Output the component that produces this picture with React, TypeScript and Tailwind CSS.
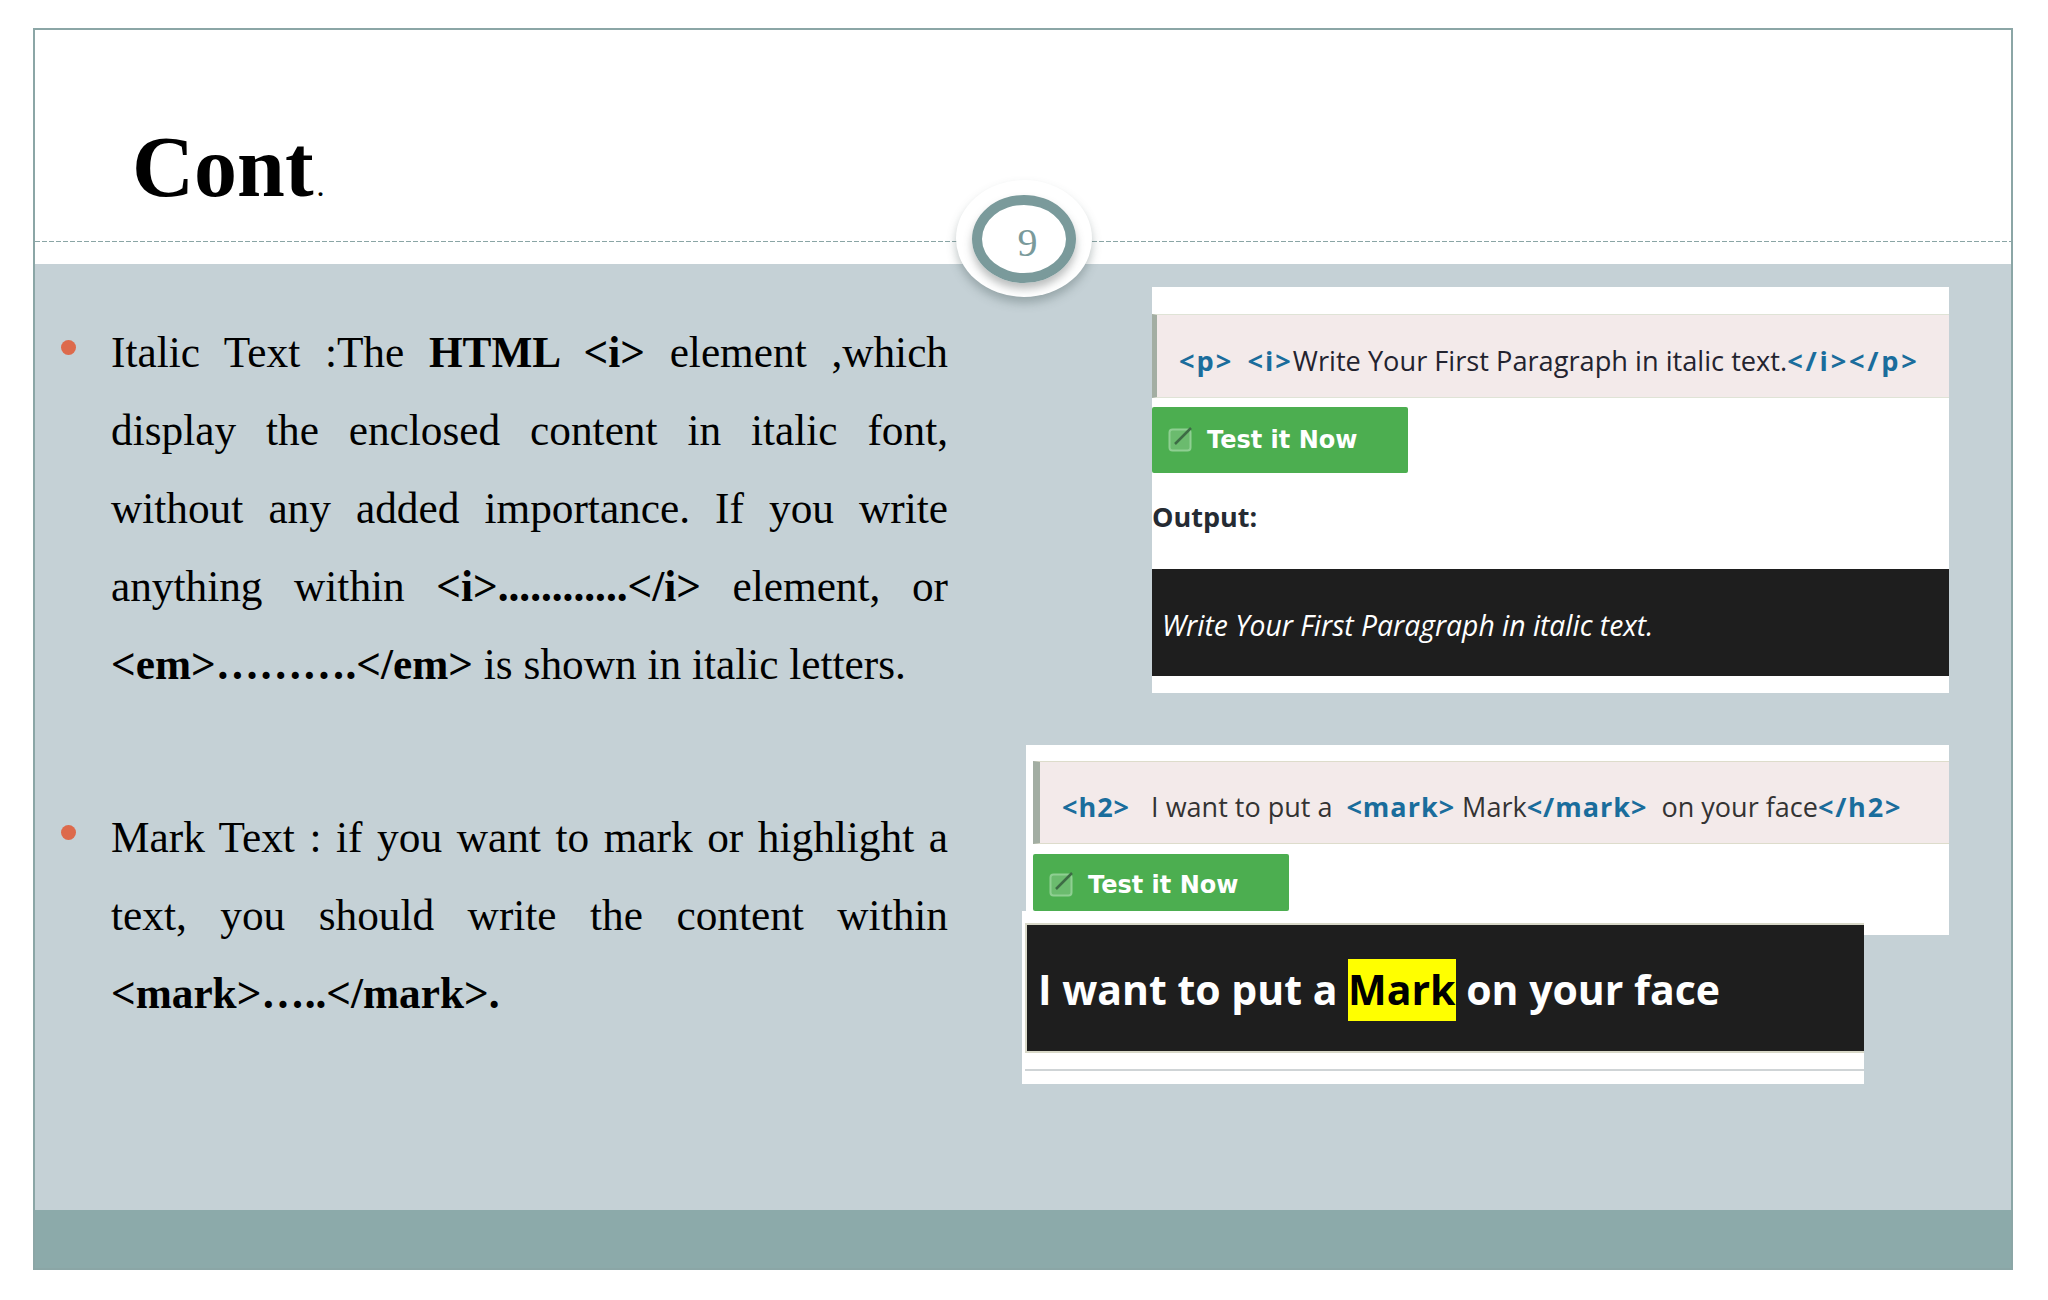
const serif = "font-['Liberation_Serif',serif]";
const ui = "font-['Open_Sans',sans-serif]";

function Tag({ children, spacing }: { children: string; spacing: string }) {
  return <span className={`font-bold text-[#1a6d9c] ${spacing}`}>{children}</span>;
}

function TestButton({ className }: { className: string }) {
  return (
    <div className={`flex w-[256px] items-center gap-[13px] rounded-[2px] bg-[#4cae50] pl-[16px] ${className}`}>
      <svg width="26" height="26" viewBox="0 0 26 26" fill="none" className="-mt-[2px]">
        <rect x="1.5" y="3.5" width="21" height="21" rx="3" fill="#6bbb6e" stroke="#8fcf92" strokeWidth="2" />
        <path d="M7 18 L23 2" stroke="#3d6b45" strokeWidth="2.5" />
      </svg>
      <span className="font-['DejaVu_Sans',sans-serif] text-[24px] font-bold leading-none text-white">Test it Now</span>
    </div>
  );
}

function Bullet({ children, className }: { children: React.ReactNode; className?: string }) {
  return (
    <li className={`flex ${className ?? ""}`}>
      <span className="mt-[27px] size-[15px] shrink-0 rounded-full bg-[#dd6a4c]" />
      <p className="ml-[35px] w-[837px] text-justify">{children}</p>
    </li>
  );
}

function PageBadge() {
  return (
    <div className="absolute left-[921px] top-[150px] flex h-[117px] w-[136px] items-center justify-center rounded-[50%] bg-white shadow-[0_6px_10px_rgba(70,90,90,0.35)]">
      <div className="flex h-[88px] w-[104px] items-center justify-center rounded-[50%] border-[10px] border-[#7a9a9b] pl-[7px] pt-[8px] shadow-[0_6px_8px_rgba(60,70,70,0.35)]">
        <span className={`${serif} text-[40px] leading-none text-[#7a9a9b]`}>9</span>
      </div>
    </div>
  );
}

export default function App() {
  return (
    <div className="h-[1300px] w-[2048px] bg-white pl-[33px] pt-[28px]">
      <div className="relative flex h-[1242px] w-[1980px] flex-col border-2 border-[#8ba6a6]">
        <header className="h-[234px] shrink-0 bg-white">
          <div className="h-[211px] pl-[97px] pt-[87px]">
            <h1 className={`${serif} text-[86px] font-bold leading-[100px] text-black`}>
              Cont<span className="ml-[4px] text-[24px]">.</span>
            </h1>
          </div>
          <div className="h-[1px] bg-[repeating-linear-gradient(90deg,#8aa5a5_0_5px,transparent_5px_7px)]" />
        </header>

        <main className="flex flex-1 bg-[#c5d1d6]">
          <ul className={`${serif} w-[949px] shrink-0 pl-[26px] pt-[49px] text-[43.3px] leading-[78px] text-black`}>
            <Bullet>
              Italic Text :The <b>HTML &lt;i&gt;</b> element ,which display the enclosed content in italic font, without any added importance. If you write anything within <b>&lt;i&gt;............&lt;/i&gt;</b> element, or <b>&lt;em&gt;……….&lt;/em&gt;</b> is shown in italic letters.
            </Bullet>
            <Bullet className="mt-[95px]">
              Mark Text : if you want to mark or highlight a text, you should write the content within <b>&lt;mark&gt;…..&lt;/mark&gt;.</b>
            </Bullet>
          </ul>

          <div className={`${ui} ml-[38px] flex w-[927px] flex-col pt-[23px]`}>
            <section className="flex h-[406px] w-[797px] flex-col self-end bg-white">
              <div className="mt-[27px] flex h-[84px] items-center border-y border-[#dfe3d6] border-l-[5px] border-l-[#a3aea3] bg-[#f3eaea] pl-[22px] pt-[10px] text-[27.2px] text-[#23232f]">
                <span className="whitespace-pre">
                  <Tag spacing="tracking-[2px]">{"<p>"}</Tag>{"  "}<Tag spacing="tracking-[2px]">{"<i>"}</Tag>Write Your First Paragraph in italic text.<Tag spacing="tracking-[2.8px]">{"</i></p>"}</Tag>
                </span>
              </div>
              <TestButton className="mt-[9px] h-[66px]" />
              <p className="mt-[24px] text-[27px] font-bold leading-[40px] text-[#252b33]">Output:</p>
              <div className="mt-[32px] flex h-[107px] items-center bg-[#1e1e1e] pl-[10px] pt-[6px] text-[28.3px] italic text-white">
                Write Your First Paragraph in italic text.
              </div>
            </section>

            <section className="ml-[4px] mt-[52px] h-[190px] w-[923px] bg-white pl-[7px] pt-[16px]">
              <div className="flex h-[83px] items-center border-y border-[#dddccb] border-l-[7px] border-l-[#a3aea3] bg-[#f3eaea] pl-[22px] pt-[10px] text-[27px] text-[#333]">
                <span className="whitespace-pre">
                  <Tag spacing="tracking-[1px]">{"<h2>"}</Tag>{"   I want to put a  "}<Tag spacing="tracking-[1px]">{"<mark>"}</Tag>{" Mark"}<Tag spacing="tracking-[1px]">{"</mark>"}</Tag>{"  on your face"}<Tag spacing="tracking-[1.8px]">{"</h2>"}</Tag>
                </span>
              </div>
              <TestButton className="mt-[10px] h-[57px] pt-[5px]" />
            </section>

            <section className="relative mt-[-24px] h-[173px] w-[842px] bg-white pl-[3px] pt-[12px]">
              <div className="flex h-[130px] items-center border-2 border-r-0 border-[#d8d8c8] bg-[#1e1e1e] pl-[11px] pt-[4px] text-[41px] font-bold text-white">
                I want to put a&nbsp;<mark className="bg-[#ffff00] text-black">Mark</mark>&nbsp;on your face
              </div>
              <div className="mt-[16px] h-[2px] bg-[#cfd4d6]" />
            </section>
          </div>
        </main>

        <footer className="h-[58px] shrink-0 bg-[#8caaaa]" />
        <PageBadge />
      </div>
    </div>
  );
}
